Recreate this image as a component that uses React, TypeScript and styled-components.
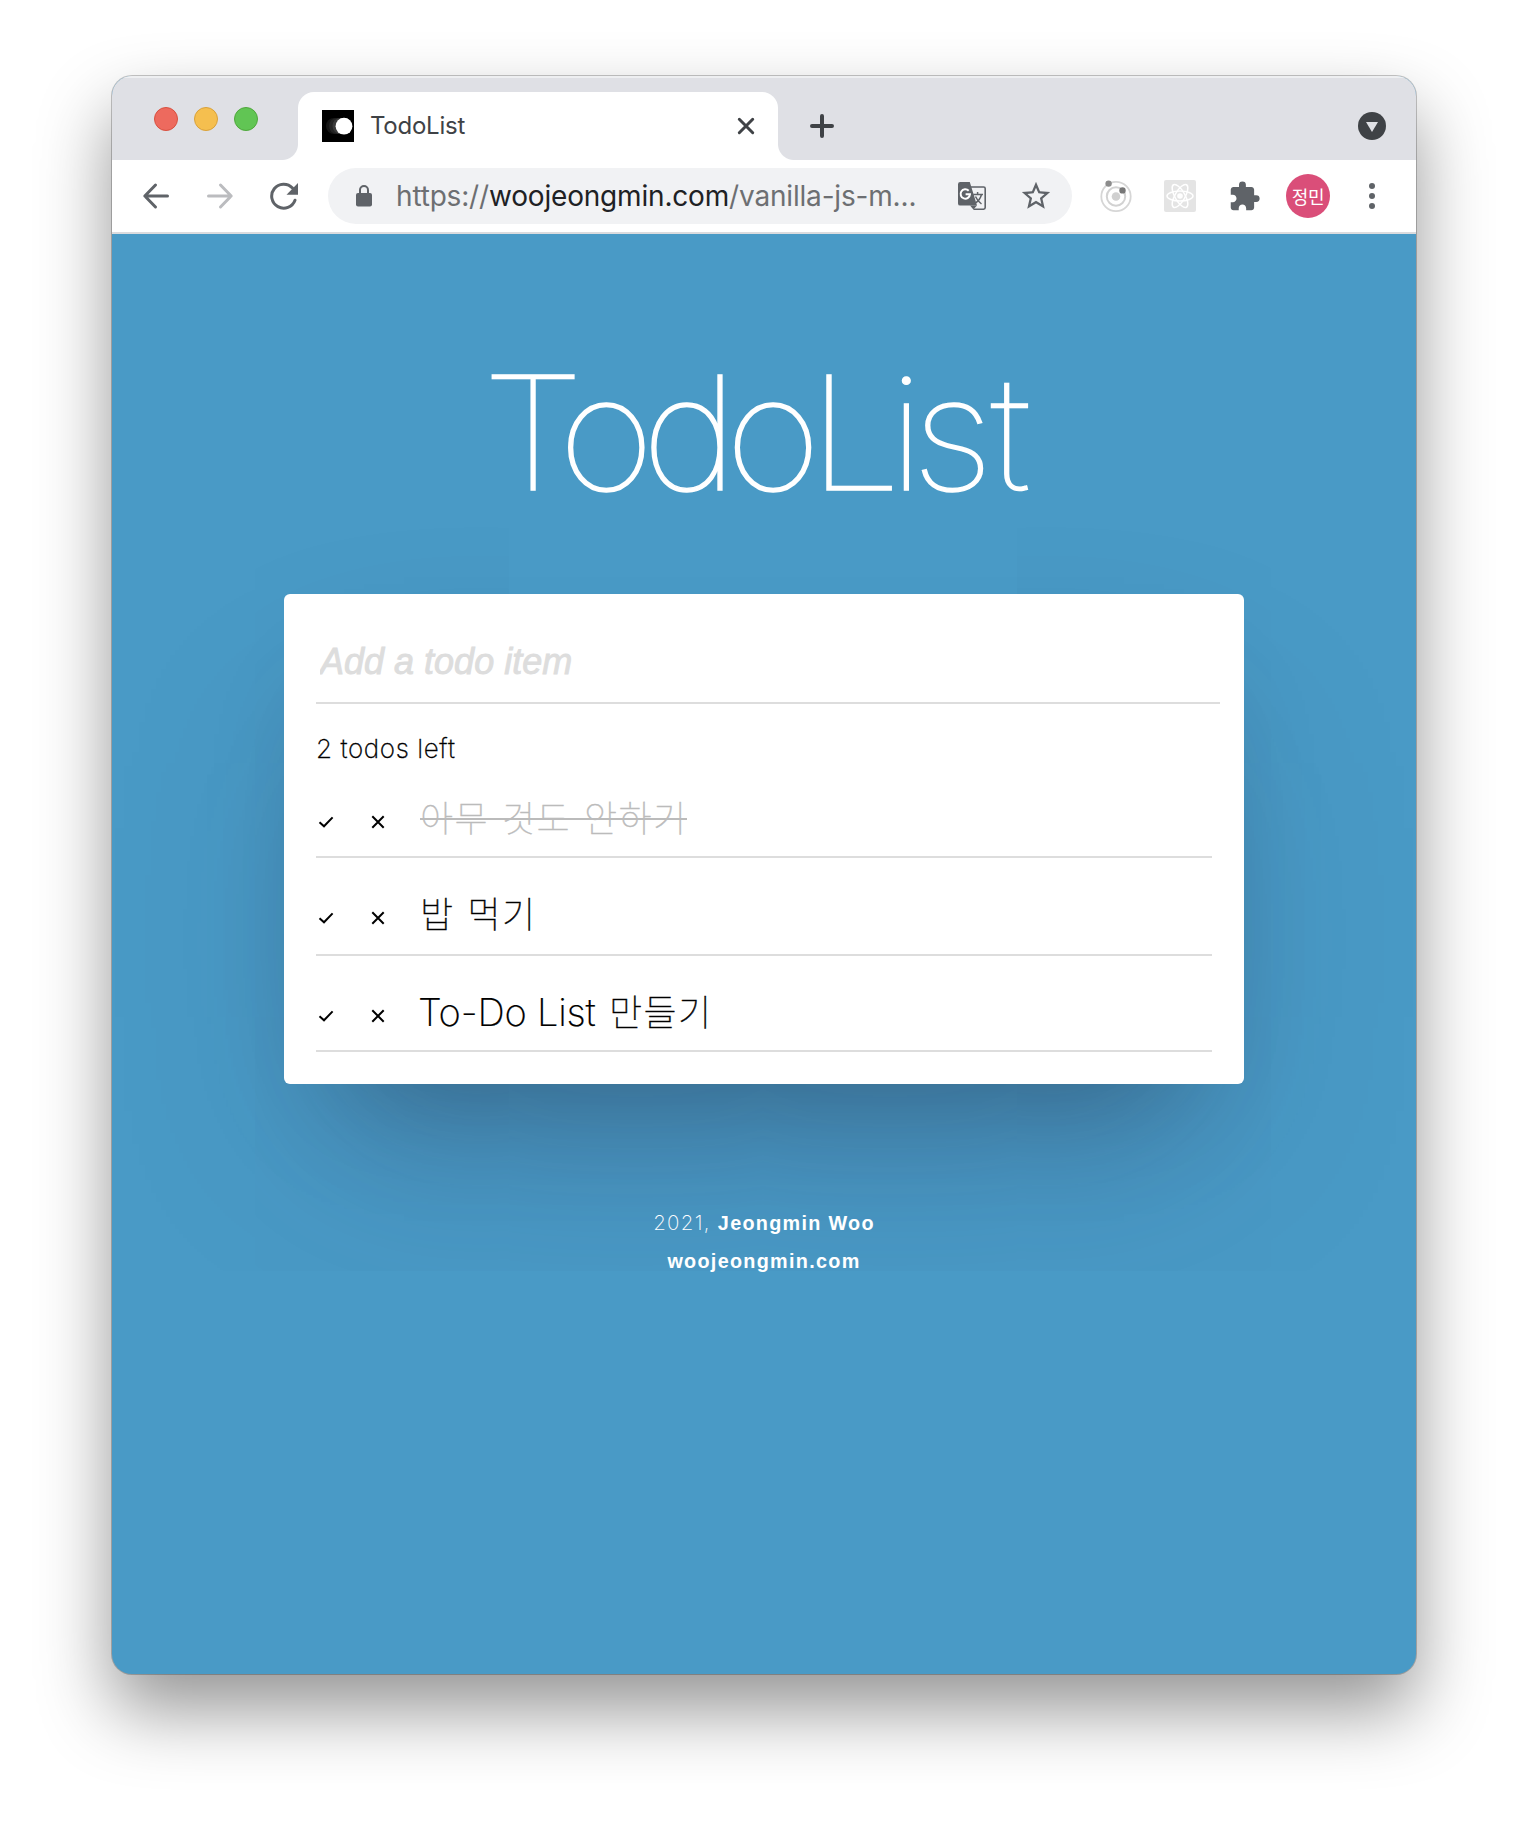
import React from "react";
import styled, { createGlobalStyle } from "styled-components";
import { MdExtension, MdStarBorder } from "react-icons/md";

const GlobalStyle = createGlobalStyle`
  * { box-sizing: border-box; }
  body { margin: 0; background: #fff; }
  button { border: 0; padding: 0; background: none; font: inherit; color: inherit; }
`;

const Desktop = styled.main`
  height: 1822px;
  padding: 76px 112px 0;
  overflow: hidden;
`;

const BrowserWindow = styled.div`
  display: flex;
  flex-direction: column;
  height: 1598px;
  border-radius: 20px;
  overflow: hidden;
  background: #499ac6;
  box-shadow: 0 0 0 1px rgba(0, 0, 0, 0.22), 0 36px 72px rgba(0, 0, 0, 0.42);
`;

/* ---------- tab strip ---------- */

const TabStrip = styled.div`
  display: flex;
  align-items: flex-end;
  height: 84px;
  padding: 0 30px 0 42px;
  background: #dfe0e5;
  box-shadow: inset 0 2px 0 #eeeff1;
`;

const TrafficLights = styled.div`
  display: flex;
  gap: 16px;
  width: 144px;
  padding-bottom: 29px;
`;

const Light = styled.span<{ $fill: string; $edge: string }>`
  width: 24px;
  height: 24px;
  border-radius: 50%;
  background: ${(p) => p.$fill};
  border: 1px solid ${(p) => p.$edge};
`;

const Tab = styled.div`
  position: relative;
  display: flex;
  align-items: center;
  width: 480px;
  height: 68px;
  padding: 0 20px 0 24px;
  border-radius: 16px 16px 0 0;
  background: #fff;

  &::before,
  &::after {
    content: "";
    position: absolute;
    bottom: 0;
    width: 16px;
    height: 16px;
  }
  &::before {
    left: -16px;
    background: radial-gradient(circle at 0 0, transparent 15.5px, #fff 16.5px);
  }
  &::after {
    right: -16px;
    background: radial-gradient(circle at 100% 0, transparent 15.5px, #fff 16.5px);
  }
`;

const Favicon = styled.svg`
  width: 32px;
  height: 32px;
  margin-right: 16px;
`;

const TabTitle = styled.span`
  flex: 1;
  font: 400 24px/32px Inter, Roboto, sans-serif;
  letter-spacing: -0.25px;
  color: #3f4246;
`;

const IconButton = styled.button<{ $w: number; $color?: string }>`
  display: flex;
  flex: none;
  align-items: center;
  justify-content: center;
  width: ${(p) => p.$w}px;
  color: ${(p) => p.$color ?? "#5f6368"};
`;

const NewTab = styled(IconButton)`
  height: 68px;
  margin-left: 26px;
`;

const TabSearch = styled(IconButton)`
  height: 68px;
  margin-left: auto;
`;

/* ---------- toolbar ---------- */

const Toolbar = styled.div`
  display: flex;
  align-items: center;
  height: 74px;
  padding: 0 11px 0 12px;
  background: #fff;
  border-bottom: 2px solid #dadbde;
`;

const Omnibox = styled.div`
  display: flex;
  flex: none;
  align-items: center;
  width: 744px;
  height: 56px;
  margin: 0 12px;
  padding: 0 4px 0 20px;
  border-radius: 28px;
  background: #f1f2f4;
`;

const Url = styled.span`
  flex: 1;
  padding-left: 16px;
  font: 400 28px/58px Inter, Roboto, sans-serif;
  letter-spacing: -0.18px;
  white-space: nowrap;
  color: #6d6f72;

  b {
    font-weight: 400;
    color: #202124;
  }
`;

const Avatar = styled.span`
  display: grid;
  flex: none;
  place-items: center;
  width: 44px;
  height: 44px;
  margin: 0 10px;
  border-radius: 50%;
  background: #da4e79;
  color: #fff;
  font: 400 18px/42px "Noto Sans CJK KR", sans-serif;
  letter-spacing: -0.3px;
`;

/* ---------- page ---------- */

const Page = styled.div`
  display: flex;
  flex-direction: column;
  align-items: center;
  flex: 1;
  padding-top: 118px;
`;

const Title = styled.h1`
  width: 564px;
  margin: 0 0 80px;
  font: 100 158px/162px Inter, Roboto, sans-serif;
  white-space: nowrap;
  color: #fff;
  -webkit-text-stroke: 1.4px #fff;
  transform: scaleX(1.05);
  transform-origin: 0 50%;
`;

const Tracked = styled.span<{ $by: number }>`
  letter-spacing: ${(p) => p.$by}px;
`;

const Card = styled.section`
  width: 960px;
  height: 490px;
  padding: 32px 24px 32px 32px;
  border-radius: 6px;
  background: #fff;
  box-shadow: 0 100px 200px -40px rgba(50, 50, 93, 0.25), 0 60px 120px -60px rgba(0, 0, 0, 0.3);
`;

const NewTodo = styled.input`
  display: block;
  width: 904px;
  height: 78px;
  padding: 0 4px 4px;
  border: 0;
  border-bottom: 2px solid #ddd;
  outline: 0;
  background: none;
  font: italic 400 36px "Liberation Sans", Arial, sans-serif;

  &::placeholder {
    color: #ddd;
    opacity: 1;
    -webkit-text-stroke: 0.9px #ddd;
  }
`;

const Remaining = styled.p`
  margin: 29px 0 0;
  font: 200 26px/32px Inter, Roboto, sans-serif;
  letter-spacing: 0.6px;
  color: #000;
  -webkit-text-stroke: 0.3px #000;
`;

const TodoList = styled.ul`
  width: 896px;
  margin: 23px 0 0;
  padding: 0;
  list-style: none;
`;

const TodoRow = styled.li<{ $h: number; $pad: number }>`
  display: flex;
  align-items: flex-end;
  height: ${(p) => p.$h}px;
  padding-bottom: ${(p) => p.$pad}px;
  border-bottom: 2px solid #ddd;
`;

const RowButton = styled.button`
  display: flex;
  height: 38px;
  align-items: center;
  justify-content: center;
  width: 20px;
  margin-right: 32px;
`;

const TodoText = styled.span<{ $done: boolean }>`
  position: relative;
  font: 200 38px/46px Inter, Roboto, sans-serif;
  white-space: pre;
  color: ${(p) => (p.$done ? "#bbb" : "#000")};

  &::after {
    content: "";
    display: ${(p) => (p.$done ? "block" : "none")};
    position: absolute;
    left: 0;
    right: 0;
    top: 25px;
    height: 2px;
    background: currentColor;
  }
`;

const Latin = styled.span`
  margin: 0 3px 0 -2px;
  letter-spacing: -0.2px;
  -webkit-text-stroke: 0.2px currentColor;
`;

const Hangul = styled.span`
  font-family: "Noto Sans CJK KR", sans-serif;
  font-weight: 100;
  font-size: 36px;
  letter-spacing: 1.4px;
  word-spacing: 3.6px;
  -webkit-text-stroke: 0.4px currentColor;
`;

const Footer = styled.footer`
  margin-top: 120px;
  text-align: center;
  color: #fff;
  font: 200 20.5px/38px Inter, Roboto, sans-serif;
  letter-spacing: 1.3px;

  strong {
    font: 700 19.8px/38px "Liberation Sans", Arial, sans-serif;
  }
`;

const FooterLine = styled.div``;

type Todo = { latin?: string; hangul: string; done: boolean; height: number; pad: number };

const todos: Todo[] = [
  { hangul: "아무 것도 안하기", done: true, height: 70, pad: 15 },
  { hangul: "밥 먹기", done: false, height: 98, pad: 17 },
  { latin: "To-Do List ", hangul: "만들기", done: false, height: 96, pad: 15 },
];

const Arrow = ({ flip }: { flip?: boolean }) => (
  <svg width="28" height="28" viewBox="0 0 28 28" fill="none" stroke="currentColor" strokeWidth="3" strokeLinecap="round" strokeLinejoin="round" transform={flip ? "scale(-1 1)" : undefined}>
    <path d="M25.5 14H3M13.5 3 2.8 14l10.7 11" />
  </svg>
);

const Reload = () => (
  <svg width="28" height="28" viewBox="0 0 28 28">
    <path d="M25 18.2A12 12 0 1 1 22.5 6" fill="none" stroke="currentColor" strokeWidth="3" strokeLinecap="round" />
    <path d="M28 1v11.7H16.5z" fill="currentColor" />
  </svg>
);

const Lock = () => (
  <svg width="16" height="22" viewBox="0 0 16 22">
    <rect y="8" width="16" height="13.5" rx="2" fill="currentColor" />
    <path d="M4 9V5a4 4 0 0 1 8 0v4" fill="none" stroke="currentColor" strokeWidth="2" />
  </svg>
);

const Translate = () => (
  <svg width="28" height="28" viewBox="0 0 28 28" fill="none">
    <path d="M13 5h12.6A1.6 1.6 0 0 1 27.2 6.6v19a1.6 1.6 0 0 1-1.6 1.600H15.5" stroke="currentColor" strokeWidth="1.6" />
    <path d="M2.2 0h9.6L19 23.600H2.200A2.200 2.200 0 0 1 0 21.400V2.200A2.200 2.200 0 0 1 2.200 0z" fill="currentColor" />
    <path d="M12 23.6h7l-3.6 4z" fill="currentColor" />
    <path d="M10.7 8.7a4.7 4.7 0 1 0 1.3 3.6H7.6" stroke="#fff" strokeWidth="2" />
    <path d="M15.2 12.5H25M19.6 10v2.500M23.500 12.500c-.9 3.700-3.200 6.600-6.200 8.700M17.500 14.500c1.400 3.200 3.500 5.700 6 7.500" stroke="currentColor" strokeWidth="1.5" />
  </svg>
);

const Orbit = () => (
  <svg width="34" height="34" viewBox="0 0 34 34" fill="none">
    <circle cx="17" cy="17.5" r="14.7" stroke="#d6d6d6" strokeWidth="1.8" />
    <circle cx="17" cy="17.5" r="9.2" stroke="#d2d2d2" strokeWidth="2" />
    <circle cx="17" cy="17.5" r="4.3" fill="#d0d0d0" />
    <circle cx="9.6" cy="4.6" r="3.2" fill="#8c8c8c" />
    <circle cx="23.5" cy="11.4" r="3.2" fill="#777" />
  </svg>
);

const ReactBadge = () => (
  <svg width="32" height="32" viewBox="0 0 32 32" fill="none" stroke="#fff" strokeWidth="1.5">
    <rect width="32" height="32" rx="2" fill="#e4e4e4" stroke="none" />
    {[0, 60, 120].map((angle) => (
      <ellipse key={angle} cx="16" cy="16" rx="13" ry="5" transform={`rotate(${angle} 16 16)`} />
    ))}
    <circle cx="16" cy="16" r="2.8" fill="#fff" stroke="none" />
  </svg>
);

export default function App() {
  return (
    <>
      <GlobalStyle />
      <Desktop>
        <BrowserWindow>
          <TabStrip>
            <TrafficLights>
              <Light $fill="#ed6a5e" $edge="#d8503f" />
              <Light $fill="#f5bf4f" $edge="#d9a13a" />
              <Light $fill="#61c554" $edge="#4fa73c" />
            </TrafficLights>
            <Tab>
              <Favicon viewBox="0 0 32 32">
                <rect width="32" height="32" />
                <circle cx="12" cy="16" r="8" fill="#151515" />
                <circle cx="15" cy="16" r="8" fill="#242424" />
                <circle cx="18.5" cy="16" r="8" fill="#3a3a3a" />
                <circle cx="22" cy="16.2" r="8.4" fill="#fff" />
              </Favicon>
              <TabTitle>TodoList</TabTitle>
              <IconButton $w={24} $color="#3f4246" aria-label="Close tab">
                <svg width="18" height="18" viewBox="0 0 18 18" stroke="currentColor" strokeWidth="3" strokeLinecap="round">
                  <path d="M2.3 2.3l13.4 13.4M15.7 2.3 2.3 15.7" />
                </svg>
              </IconButton>
            </Tab>
            <NewTab $w={36} $color="#3f4246" aria-label="New tab">
              <svg width="26" height="26" viewBox="0 0 26 26" stroke="currentColor" strokeWidth="4" strokeLinecap="round">
                <path d="M13 3v20M3 13h20" />
              </svg>
            </NewTab>
            <TabSearch $w={28} aria-label="Search tabs">
              <svg width="28" height="28" viewBox="0 0 28 28">
                <circle cx="14" cy="14" r="14" fill="#3f4246" />
                <path d="M8 10h12l-6 10z" fill="#dfe0e5" />
              </svg>
            </TabSearch>
          </TabStrip>

          <Toolbar>
            <IconButton $w={64} aria-label="Back"><Arrow /></IconButton>
            <IconButton $w={64} $color="#bbbcbf" aria-label="Forward"><Arrow flip /></IconButton>
            <IconButton $w={64} aria-label="Reload"><Reload /></IconButton>
            <Omnibox>
              <IconButton $w={32} aria-label="Site information"><Lock /></IconButton>
              <Url>https://<b>woojeongmin.com</b>/vanilla-js-m...</Url>
              <IconButton $w={64} aria-label="Translate"><Translate /></IconButton>
              <IconButton $w={64} aria-label="Bookmark"><MdStarBorder size={34} /></IconButton>
            </Omnibox>
            <IconButton $w={64} aria-label="Orbit extension"><Orbit /></IconButton>
            <IconButton $w={64} aria-label="React extension"><ReactBadge /></IconButton>
            <IconButton $w={64} aria-label="Extensions"><MdExtension size={33} /></IconButton>
            <Avatar>정민</Avatar>
            <IconButton $w={64} aria-label="Menu">
              <svg width="6" height="28" viewBox="0 0 6 28" fill="currentColor">
                <circle cx="3" cy="4" r="3" />
                <circle cx="3" cy="14" r="3" />
                <circle cx="3" cy="24" r="3" />
              </svg>
            </IconButton>
          </Toolbar>

          <Page>
            <Title>
              <Tracked $by={-12.3}>TodoLi</Tracked>
              <Tracked $by={-2.5}>st</Tracked>
            </Title>
            <Card>
              <NewTodo placeholder="Add a todo item" />
              <Remaining>2 todos left</Remaining>
              <TodoList>
                {todos.map((todo) => (
                  <TodoRow key={todo.hangul} $h={todo.height} $pad={todo.pad}>
                    <RowButton aria-label="Complete">
                      <svg width="16" height="12" viewBox="0 0 16 12" fill="none" stroke="#000" strokeWidth="2">
                        <path d="M1.5 6.2 6 10.3 14.6 1.4" />
                      </svg>
                    </RowButton>
                    <RowButton aria-label="Delete">
                      <svg width="14" height="14" viewBox="0 0 14 14" fill="none" stroke="#000" strokeWidth="2">
                        <path d="M1.3 1.3l11.4 11.4M12.7 1.3 1.3 12.7" />
                      </svg>
                    </RowButton>
                    <TodoText $done={todo.done}>
                      {todo.latin && <Latin>{todo.latin}</Latin>}
                      <Hangul>{todo.hangul}</Hangul>
                    </TodoText>
                  </TodoRow>
                ))}
              </TodoList>
            </Card>
            <Footer>
              <FooterLine>2021, <strong>Jeongmin Woo</strong></FooterLine>
              <FooterLine><strong>woojeongmin.com</strong></FooterLine>
            </Footer>
          </Page>
        </BrowserWindow>
      </Desktop>
    </>
  );
}
